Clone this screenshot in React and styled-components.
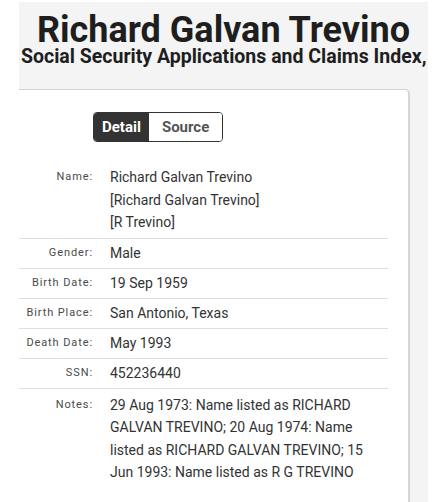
import React from "react";
import styled, { createGlobalStyle } from "styled-components";

const Global = createGlobalStyle`
  html, body { margin: 0; padding: 0; background: #ffffff; }
  body { font-family: Roboto, "Noto Sans", sans-serif; }
`;

const Panel = styled.div`
  margin: 2px 0 0 19px;
  width: 409px;
  height: 500px;
  background: #f4f4f4;
  overflow: hidden;
`;

const Header = styled.header`
  text-align: center;
  padding-top: 10px;
  white-space: nowrap;
`;

const Title = styled.h1`
  margin: 0;
  font-family: Roboto, sans-serif;
  font-weight: 700;
  font-size: 36px;
  line-height: 36px;
  color: #1e1e1e;
`;

const Subtitle = styled.h2`
  margin: 0;
  font-family: Roboto, sans-serif;
  font-weight: 700;
  font-size: 19.5px;
  line-height: 18px;
  color: #1e1e1e;
  text-align: left;
  padding-left: 2px;
`;

const Card = styled.section`
  margin-top: 23px;
  width: 391px;
  background: #ffffff;
  border-top: 1px solid #d2d2d2;
  border-right: 2px solid #d6d6d6;
  border-top-right-radius: 5px;
  padding: 22px 20px 20px 0;
  box-sizing: border-box;
  height: 430px;
`;

const Tabs = styled.div`
  display: inline-flex;
  margin-left: 74px;
  border: 1px solid #333;
  border-radius: 4px;
  overflow: hidden;
`;

const Tab = styled.button`
  font-family: Roboto, sans-serif;
  font-weight: 700;
  font-size: 15px;
  height: 28px;
  padding: 0 ${(p) => (p.$active ? "8px" : "13px")};
  border: none;
  background: ${(p) => (p.$active ? "#333333" : "#ffffff")};
  color: ${(p) => (p.$active ? "#ffffff" : "#555555")};
  cursor: pointer;
`;

const Table = styled.dl`
  margin: 19px 0 0 0;
`;

const Row = styled.div`
  display: grid;
  grid-template-columns: 74px 1fr;
  column-gap: 17px;
  padding: ${(p) => (p.$multi ? "5px 0 4px" : "0")};
  min-height: 29px;
  align-items: ${(p) => (p.$multi ? "start" : "center")};
  border-bottom: ${(p) => (p.$last ? "none" : "1px solid #dedede")};
`;

const Label = styled.dt`
  margin: 0;
  text-align: right;
  font-family: Roboto, sans-serif;
  font-size: 11px;
  letter-spacing: 0.9px;
  color: #4a4a4a;
  line-height: 22.5px;
`;

const Value = styled.dd`
  margin: 0;
  font-family: Roboto, sans-serif;
  font-size: 14px;
  color: #333;
  line-height: 22.5px;
`;

const rows = [
  { label: "Name:", value: ["Richard Galvan Trevino", "[Richard Galvan Trevino]", "[R Trevino]"], multi: true },
  { label: "Gender:", value: ["Male"] },
  { label: "Birth Date:", value: ["19 Sep 1959"] },
  { label: "Birth Place:", value: ["San Antonio, Texas"] },
  { label: "Death Date:", value: ["May 1993"] },
  { label: "SSN:", value: ["452236440"] },
  {
    label: "Notes:",
    value: [
      "29 Aug 1973: Name listed as RICHARD GALVAN TREVINO; 20 Aug 1974: Name listed as RICHARD GALVAN TREVINO; 15 Jun 1993: Name listed as R G TREVINO",
    ],
    multi: true,
    last: true,
  },
];

export default function App() {
  return (
    <>
      <Global />
      <Panel>
        <Header>
          <Title>Richard Galvan Trevino</Title>
          <Subtitle>Social Security Applications and Claims Index,</Subtitle>
        </Header>
        <Card>
          <Tabs>
            <Tab $active>Detail</Tab>
            <Tab>Source</Tab>
          </Tabs>
          <Table>
            {rows.map((r) => (
              <Row key={r.label} $multi={r.multi} $last={r.last}>
                <Label>{r.label}</Label>
                <Value>
                  {r.value.map((v, i) => (
                    <div key={i}>{v}</div>
                  ))}
                </Value>
              </Row>
            ))}
          </Table>
        </Card>
      </Panel>
    </>
  );
}
